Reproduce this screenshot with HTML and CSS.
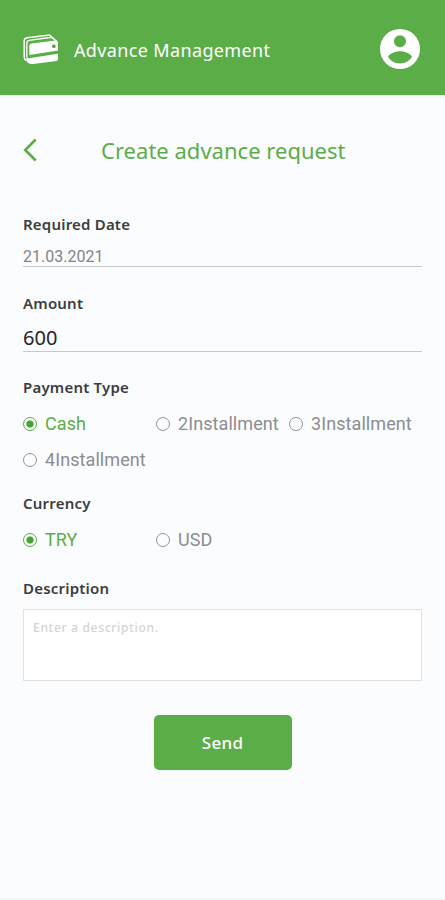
FILE: index.html
```
<!DOCTYPE html>
<html lang="en">
<head>
<meta charset="utf-8">
<title>Advance Management</title>
<link rel="stylesheet" href="styles.css">
</head>
<body>
<header class="topbar">
  <svg class="wallet" viewBox="0 0 38 32" width="38" height="32" fill="none">
    <path d="M4.500 27.500Q2.300 26.500 2.200 24V8.200Q2.200 5.300 5 4.800L27.500 2l5 4.500" stroke="#fff" stroke-width="1.500"/>
    <path d="M4.800 24.500V10.200Q4.800 7.700 7.300 7.300L29.500 4.300 34.500 8" stroke="#fff" stroke-width="1.300"/>
    <path d="M9.500 10.500 33.500 7.500Q36 7.300 36 9.500V17.600L7.300 22V13Q7.300 10.800 9.500 10.500Z" fill="#fff"/>
    <path d="M4.500 24.500 7 25.300 36 20.800V26Q36 27.600 34.500 27.900L11 30.900Q6 31.200 4.500 28Z" fill="#fff"/>
    <rect x="30" y="11.500" width="3.600" height="3.500" rx="1.200" fill="#5bad48"/>
  </svg>
  <span class="brand">Advance Management</span>
  <svg class="avatar" viewBox="0 0 40 40" width="40" height="40">
    <circle cx="20" cy="20" r="20" fill="#fff"/>
    <circle cx="20" cy="12.2" r="6" fill="#5bad48"/>
    <path d="M8 27.8C9.3 24.7 14.5 22.2 20 22.2s10.700 2.500 12 5.600C29.600 32 25 34.500 20 34.500S10.400 32 8 27.800Z" fill="#5bad48"/>
  </svg>
</header>
<main class="page">
  <div class="heading">
    <svg class="back" viewBox="0 0 14 24" width="14" height="24" fill="none" stroke="#5bad48" stroke-width="2.600"><path d="M12.700 1.500 2.200 12 12.700 22.500"/></svg>
    <h1 class="title">Create advance request</h1>
  </div>
  <form class="form">
    <div class="label date-label">Required Date</div>
    <div class="field date">21.03.2021</div>
    <div class="label amount-label">Amount</div>
    <div class="field amount">600</div>
    <div class="label payment-label">Payment Type</div>
    <div class="options">
      <div class="option selected"><i class="radio"></i>Cash</div>
      <div class="option"><i class="radio"></i>2Installment</div>
      <div class="option"><i class="radio"></i>3Installment</div>
      <div class="option"><i class="radio"></i>4Installment</div>
    </div>
    <div class="label currency-label">Currency</div>
    <div class="options">
      <div class="option selected"><i class="radio"></i>TRY</div>
      <div class="option"><i class="radio"></i>USD</div>
    </div>
    <div class="label description-label">Description</div>
    <div class="textarea"><span class="placeholder">Enter a description.</span></div>
    <button class="send" type="button">Send</button>
  </form>
</main>
</body>
</html>
```
FILE: styles.css
```
* { box-sizing: border-box; }
body {
  margin: 0;
  height: 900px;
  display: flex;
  flex-direction: column;
  background: #fbfcfe;
  font-family: "Noto Sans", "Open Sans", sans-serif;
}
.topbar {
  height: 95px;
  flex: none;
  display: flex;
  align-items: center;
  padding: 3px 25px 0 22px;
  background: #5bad48;
  box-shadow: 0 1px 3px rgba(60, 60, 90, 0.12);
}
.brand {
  margin-left: 14px;
  padding-top: 2px;
  font-size: 18px;
  line-height: 28px;
  letter-spacing: 0.36px;
  color: #fff;
}
.avatar { margin-left: auto; }
.page {
  flex: 1;
  padding: 40px 23px 0;
  border-bottom: 2px solid #f4f5f6;
}
.heading { display: flex; align-items: center; height: 30px; }
.title {
  margin: 0 0 0 64px;
  font-size: 22px;
  font-weight: 400;
  line-height: 30px;
  letter-spacing: 0.02px;
  color: #5bad48;
}
.form { display: flex; flex-direction: column; padding-top: 49px; }
.label {
  font-size: 15px;
  font-weight: 600;
  line-height: 20px;
  letter-spacing: 0.2px;
  color: #3c3c3e;
}
.field { border-bottom: 1px solid #c6c8ca; }
.date {
  height: 33px;
  padding-top: 13px;
  font: 16px/20px Roboto, sans-serif;
  color: #828486;
}
.amount-label { margin-top: 26px; }
.amount {
  height: 39px;
  padding-top: 11px;
  font-size: 20px;
  line-height: 28px;
  color: #252527;
}
.payment-label { margin-top: 25px; }
.options {
  display: grid;
  grid-template-columns: repeat(3, 133px);
  grid-auto-rows: 36px;
  margin-top: 9px;
}
.option {
  display: flex;
  align-items: center;
  gap: 8px;
  font: 18px/24px Roboto, sans-serif;
  letter-spacing: 0.08px;
  color: #8b8d8f;
}
.option.selected { color: #5bad48; }
.radio {
  width: 14px;
  height: 14px;
  border: 1px solid #919395;
  border-radius: 50%;
}
.selected .radio {
  border-color: #5bad48;
  background: radial-gradient(circle, #45a332 3.2px, transparent 4px);
}
.currency-label { margin-top: 15px; }
.description-label { margin-top: 20px; }
.textarea {
  height: 72px;
  margin-top: 11px;
  padding: 8px 9px;
  border: 1px solid #dfe2e3;
  background: #fff;
}
.placeholder {
  display: block;
  font-size: 12px;
  font-weight: 500;
  line-height: 20px;
  letter-spacing: 0.7px;
  color: #d2d4d5;
}
.send {
  align-self: center;
  width: 138px;
  height: 55px;
  margin-top: 34px;
  padding: 0;
  border: 0;
  border-radius: 5px;
  background: #5bad48;
  color: #fff;
  font: 500 17px/24px "Noto Sans", sans-serif;
  letter-spacing: 0.3px;
}
```
